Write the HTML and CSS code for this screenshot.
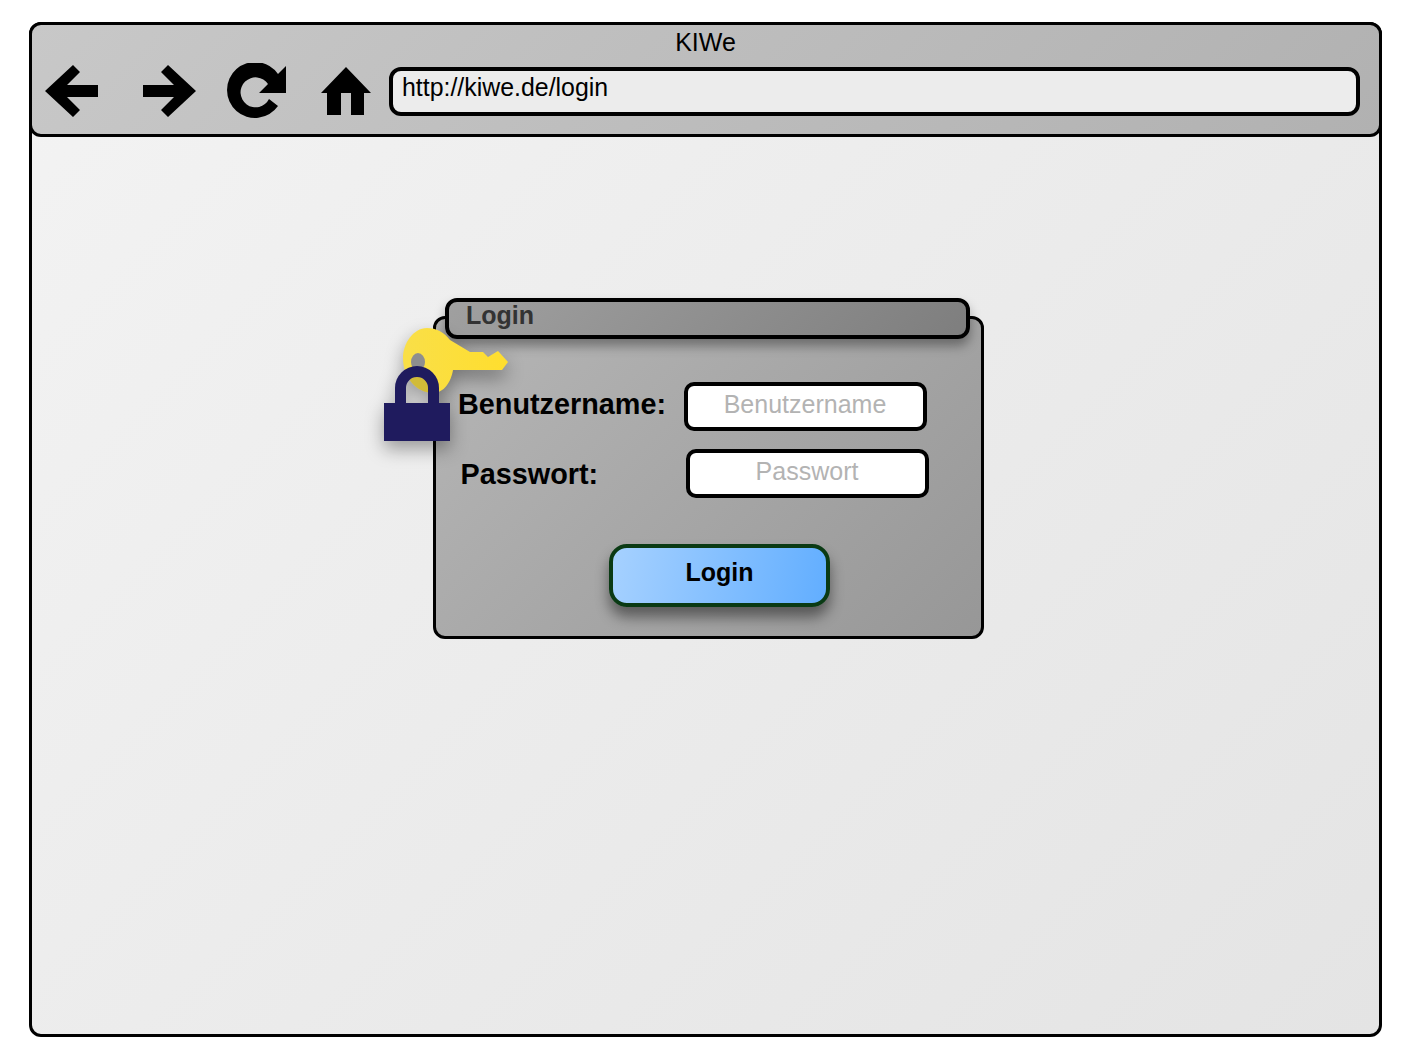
FILE: index.html
```html
<!DOCTYPE html>
<html>
<head>
	<title>KIWe</title>
	<link rel="stylesheet" href="styles.css">
</head>
<body>
	<div class="window">
		<div class="toolbar">
			<div class="title">KIWe</div>
			<div class="nav">
				<svg class="icon back" width="54" height="52" viewBox="0 0 54 52"><path d="M0 26 L28 0 L35 7 L22 20 H53 V32 H22 L35 45 L28 52 Z"/></svg>
				<svg class="icon forward" width="54" height="52" viewBox="0 0 54 52"><path d="M53 26 L25 0 L18 7 L31 20 H0 V32 H31 L18 45 L25 52 Z"/></svg>
				<svg class="icon reload" width="60" height="58" viewBox="0 0 60 58"><path d="M51 43 A28 28 0 1 1 51 11 L59 3 V30 H32 L41 21 A15 15 0 1 0 42 36 Z"/></svg>
				<svg class="icon home" width="50" height="49" viewBox="0 0 50 49"><path d="M0 26 L25 0 L50 26 H43 V48 H30 V26 H20 V48 H6 V26 Z"/></svg>
				<div class="url">http://kiwe.de/login</div>
			</div>
		</div>
		<div class="content">
			<div class="panel">
				<div class="panel-head">Login</div>
				<svg class="keylock" width="126" height="116" viewBox="0 0 126 116">
					<defs>
						<linearGradient id="keyfill" x1="0" y1="0" x2="1" y2="0">
							<stop offset="0" stop-color="#f9df48"/>
							<stop offset="1" stop-color="#ffde2e"/>
						</linearGradient>
						<clipPath id="keyhead">
							<path d="M43 2 C29 2 19 18 19 32 C19 52 33 67 49 67 C60 67 67 56 69 44 V2 Z"/>
						</clipPath>
					</defs>
					<path fill="url(#keyfill)" d="M66 14 L86 26 L99 26 L104 31 L114 25 L124 36 L118 44 L69 44 C67 56 60 67 49 67 C33 67 19 52 19 32 C19 18 29 2 43 2 C52 2 60 6 66 14 Z"/>
					<path fill="#000000" fill-opacity="0.16" clip-path="url(#keyhead)" d="M22 77 V62 A11 11 0 0 1 44 62 V77 Z"/>
					<ellipse cx="34" cy="36" rx="7" ry="9" fill="#8e8e8e"/>
					<path fill="#1f1b5e" d="M11 77 V62 A22 22 0 0 1 55 62 V77 H44 V62 A11 11 0 0 0 22 62 V77 Z"/>
					<rect x="0" y="77" width="66" height="38" fill="#1f1b5e"/>
				</svg>
				<div class="row">
					<div class="label">Benutzername:</div>
					<div class="field">Benutzername</div>
				</div>
				<div class="row row-pass">
					<div class="label">Passwort:</div>
					<div class="field">Passwort</div>
				</div>
				<div class="button">Login</div>
			</div>
		</div>
	</div>
</body>
</html>
```

FILE: styles.css
```css
* {
	padding: 0px;
	margin: 0px;
	box-sizing: border-box;
}

body {
	background-color: #ffffff;
	font-family: "Liberation Sans", Arial, sans-serif;
	padding: 22px 23px 13px 29px;
}

.window {
	width: 1353px;
	height: 1015px;
	border: 3px solid #000000;
	border-radius: 12px;
	background: linear-gradient(135deg, #f3f3f3, #e4e4e4);
}

.toolbar {
	margin: -3px;
	height: 115px;
	border: 3px solid #000000;
	border-radius: 12px;
	background: linear-gradient(135deg, #c8c8c8, #b1b1b1);
}

.title {
	font-size: 25px;
	line-height: 29px;
	padding-top: 3px;
	text-align: center;
	color: #000000;
}

.nav {
	display: flex;
	align-items: flex-start;
	padding-top: 4px;
}

.icon {
	flex: none;
	fill: #000000;
}

.back {
	margin-left: 13px;
	margin-top: 4px;
}

.forward {
	margin-left: 44px;
	margin-top: 4px;
}

.reload {
	margin-left: 30px;
	margin-top: 2px;
}

.home {
	margin-left: 34px;
	margin-top: 6px;
}

.url {
	margin-left: 18px;
	margin-top: 6px;
	width: 971px;
	height: 49px;
	border: 4px solid #000000;
	border-radius: 12px;
	background-color: #ececec;
	font-size: 24.9px;
	line-height: 33px;
	padding-left: 9px;
	color: #000000;
}

.content {
	padding: 182px 0px 0px 401px;
}

.panel {
	position: relative;
	width: 551px;
	height: 323px;
	border: 3px solid #000000;
	border-radius: 12px;
	background: linear-gradient(135deg, #b6b6b6, #979797);
	padding-top: 63px;
}

.panel-head {
	position: absolute;
	left: 9px;
	top: -21px;
	width: 525px;
	height: 41px;
	border: 4px solid #000000;
	border-radius: 12px;
	background: linear-gradient(135deg, #a0a0a0, #7e7e7e);
	box-shadow: 0px 7px 11px rgba(0, 0, 0, 0.35);
	font-size: 25px;
	font-weight: bold;
	line-height: 26px;
	padding-left: 17px;
	color: #333333;
}

.keylock {
	position: absolute;
	left: -52px;
	top: 7px;
	overflow: visible;
	filter: drop-shadow(0px 8px 9px rgba(0, 0, 0, 0.35));
}

.row {
	display: flex;
	padding-left: 22px;
}

.row-pass {
	margin-top: 18px;
	padding-left: 24.5px;
}

.label {
	width: 225.5px;
	font-size: 28.8px;
	font-weight: bold;
	line-height: 45px;
	color: #000000;
}

.row-pass .label {
	width: 225px;
	height: 49px;
	line-height: 51px;
}

.field {
	width: 243px;
	height: 49px;
	border: 4px solid #000000;
	border-radius: 10px;
	background-color: #ffffff;
	font-size: 25px;
	line-height: 37px;
	text-align: center;
	color: #b3b3b3;
}

.button {
	margin: 46px 0px 0px 173px;
	width: 221px;
	height: 63px;
	border: 4px solid #0a3a14;
	border-radius: 18px;
	background: linear-gradient(100deg, #a6d1ff, #62aeff);
	box-shadow: 0px 10px 14px rgba(0, 0, 0, 0.45);
	font-size: 25px;
	font-weight: bold;
	line-height: 49px;
	text-align: center;
	color: #000000;
}
```
